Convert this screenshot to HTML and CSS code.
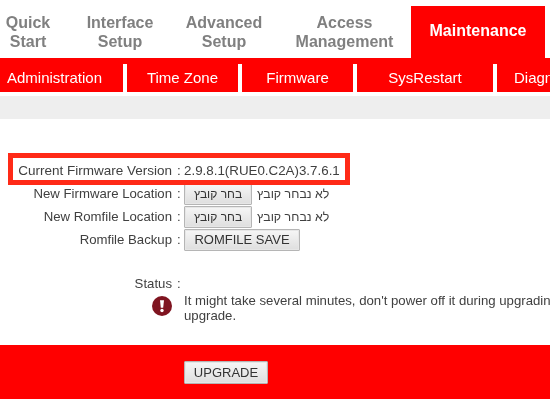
FILE: index.html
```html
<!DOCTYPE html>
<html lang="en">
<head>
<meta charset="utf-8">
<title>Firmware</title>
<link rel="stylesheet" href="styles.css">
</head>
<body>
<div class="page">
  <nav class="tabs">
    <a class="tab tab-quick">Quick<br>Start</a>
    <a class="tab tab-interface">Interface<br>Setup</a>
    <a class="tab tab-advanced">Advanced<br>Setup</a>
    <a class="tab tab-access">Access<br>Management</a>
    <a class="tab tab-active">Maintenance</a>
  </nav>
  <nav class="subnav">
    <a class="sub sub-admin">Administration</a>
    <a class="sub sub-time">Time Zone</a>
    <a class="sub sub-firmware">Firmware</a>
    <a class="sub sub-restart">SysRestart</a>
    <a class="sub sub-diag">Diagnostics</a>
  </nav>
  <div class="strip"></div>
  <main class="content">
    <div class="highlight"></div>
    <div class="row row-version">
      <span class="label">Current Firmware Version</span><span class="colon">:</span>
      <span class="value">2.9.8.1(RUE0.C2A)3.7.6.1</span>
    </div>
    <div class="row">
      <span class="label">New Firmware Location</span><span class="colon">:</span>
      <button class="btn btn-file" dir="rtl" lang="he">בחר קובץ</button>
      <span class="nofile" dir="rtl" lang="he">לא נבחר קובץ</span>
    </div>
    <div class="row">
      <span class="label">New Romfile Location</span><span class="colon">:</span>
      <button class="btn btn-file" dir="rtl" lang="he">בחר קובץ</button>
      <span class="nofile" dir="rtl" lang="he">לא נבחר קובץ</span>
    </div>
    <div class="row">
      <span class="label">Romfile Backup</span><span class="colon">:</span>
      <button class="btn btn-save">ROMFILE SAVE</button>
    </div>
    <div class="row status">
      <span class="label">Status</span><span class="colon">:</span>
    </div>
    <div class="message">
      <svg class="alert" viewBox="0 0 20 20" width="20" height="20" aria-hidden="true">
        <circle cx="10" cy="10" r="10" fill="#7f1420"/>
        <path d="M8 4.2h4l-.8 7.6H8.800z" fill="#fff"/>
        <circle cx="10" cy="14.500" r="1.700" fill="#fff"/>
      </svg>
      <p class="message-text">It might take several minutes, don't power off it during upgrading<br>upgrade.</p>
    </div>
  </main>
  <footer class="footer">
    <button class="btn btn-upgrade">UPGRADE</button>
  </footer>
</div>
</body>
</html>
```
FILE: styles.css
```css
html, body {
  margin: 0;
  padding: 0;
  background: #fff;
  overflow: hidden;
}
.page {
  position: relative;
  width: 550px;
  height: 400px;
  overflow: hidden;
  display: flex;
  flex-direction: column;
  font-family: "Liberation Sans", Arial, sans-serif;
  font-size: 13.2px;
  color: #404040;
  filter: blur(0.5px);
}
.tabs {
  display: flex;
  height: 52px;
  padding-top: 6px;
  flex: none;
}
.tab {
  display: flex;
  align-items: center;
  justify-content: center;
  text-align: center;
  font-size: 16px;
  line-height: 19px;
  font-weight: bold;
  color: #808080;
  box-sizing: border-box;
}
.tab-quick { width: 56px; margin-right: 14px; }
.tab-interface { width: 100px; }
.tab-advanced { width: 108px; }
.tab-access { width: 133px; }
.tab-active {
  width: 134px;
  background: #ff0000;
  color: #fff;
  padding-bottom: 3px;
}
.subnav {
  display: flex;
  flex: none;
  height: 28px;
  padding-top: 6px;
  background: #ff0000;
  box-sizing: content-box;
}
.sub {
  display: flex;
  align-items: center;
  justify-content: center;
  flex: none;
  box-sizing: border-box;
  border-right: 4px solid #fff;
  color: #fff;
  font-size: 15px;
  padding-bottom: 2px;
}
.sub-admin { width: 127px; padding-right: 14px; }
.sub-time { width: 115px; }
.sub-firmware { width: 115px; }
.sub-restart { width: 140px; }
.sub-diag { width: 110px; border-right: 0; justify-content: flex-start; padding-left: 17px; white-space: nowrap; }
.strip {
  flex: none;
  height: 23px;
  margin-top: 4px;
  background: #eeeeee;
}
.content {
  flex: 1;
  position: relative;
  padding-top: 40px;
}
.highlight {
  position: absolute;
  left: 8px;
  top: 34px;
  width: 332px;
  height: 22px;
  border: 5px solid #ff2a17;
  z-index: 1;
}
.row {
  display: flex;
  align-items: center;
  height: 23px;
}
.row-version { font-size: 13.5px; }
.row-version .value { font-size: 13.35px; }
.label {
  width: 172px;
  text-align: right;
  flex: none;
}
.colon {
  width: 12px;
  padding-left: 5px;
  box-sizing: border-box;
  flex: none;
}
.btn {
  font-family: inherit;
  font-size: 13px;
  color: #333;
  height: 22px;
  padding: 0;
  border: 1px solid #b5b5b5;
  border-radius: 1px;
  background: linear-gradient(#f6f6f6, #dedede);
  box-shadow: 0 0 0 1px #e6e6e6 inset;
}
.btn-file { width: 68px; margin-top: 1px; font-size: 12px; }
.btn-save { width: 116px; }
.nofile { margin-left: 5px; font-size: 12.4px; }
.status { margin-top: 21px; }
.message {
  display: flex;
  align-items: flex-start;
  margin-top: -2px;
  padding-left: 152px;
  width: 398px;
}
.alert {
  flex: none;
  margin-top: 3px;
  margin-right: 12px;
}
.message-text {
  margin: 0;
  line-height: 15px;
  white-space: nowrap;
}
.footer {
  flex: none;
  height: 54px;
  margin-bottom: 1px;
  background: #ff0000;
  padding: 16px 0 0 184px;
  box-sizing: border-box;
}
.btn-upgrade { width: 84px; height: 23px; display: block; }
```
